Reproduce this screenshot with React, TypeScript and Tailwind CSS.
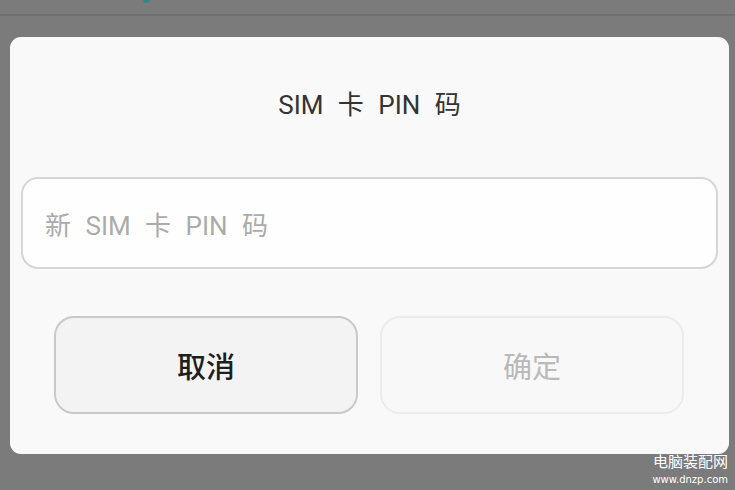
export default function App() {
  const font = { fontFamily: 'Roboto, "Noto Sans CJK SC", sans-serif' };
  return (
    <div className="relative w-[735px] h-[490px] bg-[#7b7b7b] overflow-hidden" style={font}>
      <div className="absolute left-[143px] top-[-4px] w-[7px] h-[7px] rounded-full bg-[#2f8a86]" />
      <div className="h-[14px]" />
      <div className="h-[2px] bg-[#6e6e6e]" />
      <div className="pt-[21px] pl-[10px] pr-[6px]">
        <div className="h-[417px] rounded-[11px] bg-[#f9f9f9] flex flex-col px-[11px]">
          <div className="h-[140px] pt-[55px] text-center text-[26px] leading-[26px] text-[#333] [word-spacing:8px]">
            SIM 卡 PIN 码
          </div>
          <div className="h-[92px] rounded-[17px] border-2 border-[#d6d6d6] bg-[#fefefe] flex items-center pl-[22px] pt-[6px]">
            <span className="text-[26px] leading-[26px] text-[#ababab] [word-spacing:8px]">新 SIM 卡 PIN 码</span>
          </div>
          <div className="mt-[47px] px-[33px] flex gap-[22px]">
            <button className="w-[304px] h-[98px] rounded-[20px] border-2 border-[#c9c9c9] bg-[#f3f3f3] text-[29px] font-medium text-[#1e1e1e] flex items-center justify-center pt-[8px]">
              取消
            </button>
            <button className="w-[304px] h-[98px] rounded-[20px] border-2 border-[#ececec] bg-[#f8f8f8] text-[29px] text-[#b9b9b9] flex items-center justify-center pt-[8px]">
              确定
            </button>
          </div>
        </div>
      </div>
      <div className="absolute right-[7px] top-[453px] flex flex-col items-end text-white">
        <span className="text-[15px] leading-[19px]">电脑装配网</span>
        <span className="text-[10px] leading-[12px] mt-[2px]" style={{ fontFamily: '"DejaVu Sans", sans-serif' }}>www.dnzp.com</span>
      </div>
    </div>
  );
}
